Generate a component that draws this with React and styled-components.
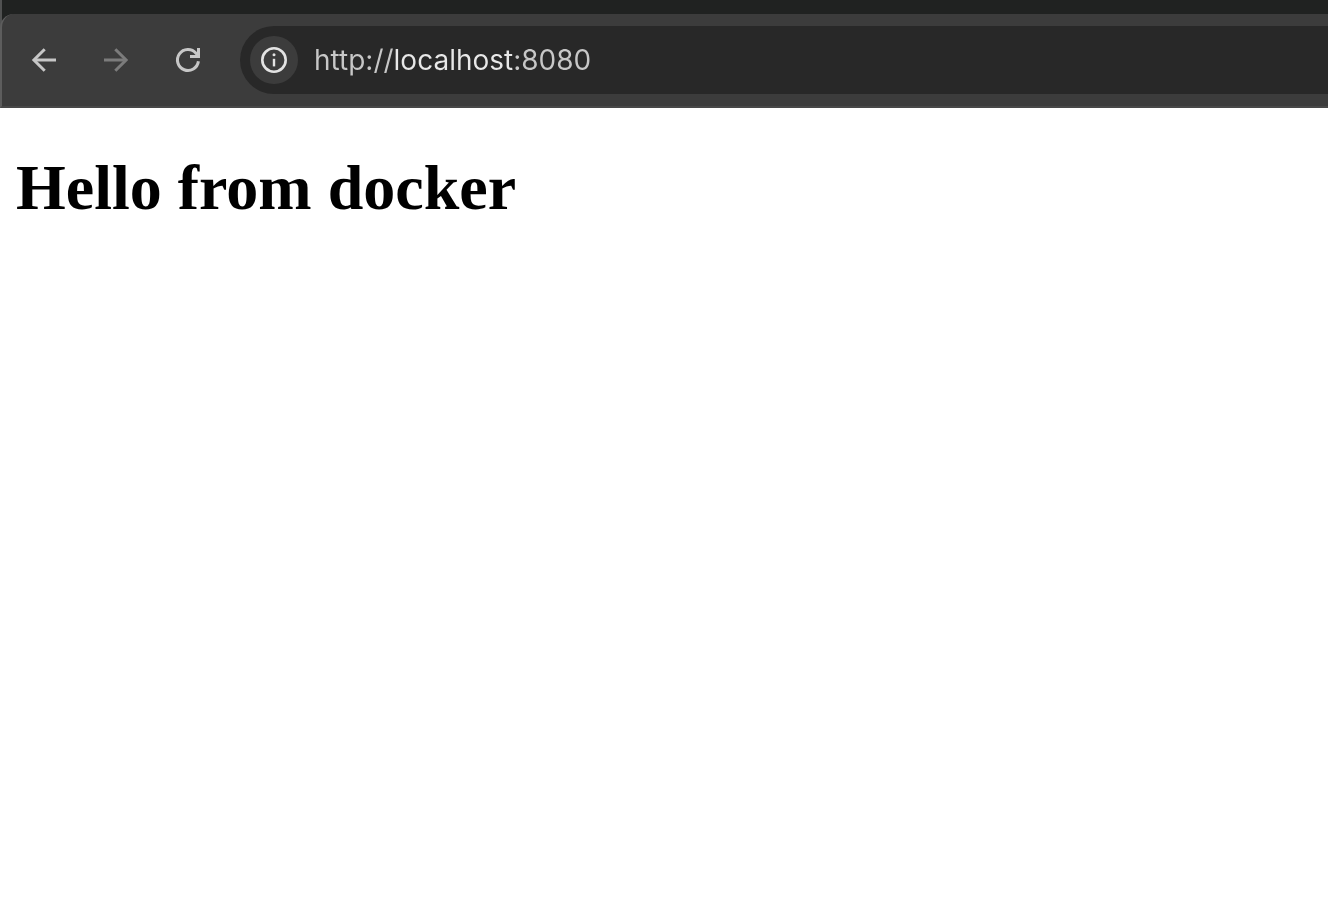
import React from "react";
import styled, { createGlobalStyle } from "styled-components";

const GlobalStyle = createGlobalStyle`
  body {
    margin: 0;
    background: #ffffff;
  }
  *, *::before, *::after {
    box-sizing: border-box;
  }
`;

const BrowserFrame = styled.header`
  padding-top: 14px;
  background: linear-gradient(to right, #505151 2px, #202221 2px);
`;

const Toolbar = styled.nav`
  display: flex;
  align-items: center;
  gap: 24px;
  height: 94px;
  padding-left: 18px;
  border-left: 2px solid #5d5d5d;
  border-bottom: 2px solid #484848;
  border-top-left-radius: 14px;
  background: #3c3c3c;
`;

const NavButton = styled.button`
  display: flex;
  flex: none;
  padding: 0;
  border: 0;
  background: none;
  color: ${({ $muted }) => ($muted ? "#7c7c7c" : "#c7c7c7")};
`;

const AddressBar = styled.div`
  display: flex;
  flex: 1;
  align-items: center;
  gap: 16px;
  min-width: 0;
  height: 68px;
  margin-left: 4px;
  padding-left: 10px;
  border-radius: 34px 0 0 34px;
  background: #282828;
`;

const SiteInfoButton = styled.button`
  display: flex;
  flex: none;
  padding: 0;
  border: 0;
  border-radius: 50%;
  background: #3c3c3c;
  color: #e3e3e3;
`;

const UrlInput = styled.input`
  flex: 1;
  min-width: 0;
  height: 40px;
  padding: 0;
  border: 0;
  outline: 0;
  font: 400 28px/40px Inter, "Liberation Sans", sans-serif;
  color: #c7c7c7;
  background: linear-gradient(to right, #c7c7c7 79px, #e8e8e8 79px 199px, #c7c7c7 199px);
  background-clip: text;
  -webkit-text-fill-color: transparent;
`;

const Page = styled.main`
  padding: 43px 16px;
`;

const Heading = styled.h1`
  margin: 0;
  font: 700 64px/74px "Liberation Serif", serif;
  color: #000000;
`;

function Icon({ size = 48, children }) {
  return (
    <svg
      width={size}
      height={size}
      viewBox="0 0 48 48"
      fill="none"
      stroke="currentColor"
      strokeWidth="3"
      aria-hidden="true"
    >
      {children}
    </svg>
  );
}

export default function App() {
  return (
    <>
      <GlobalStyle />
      <BrowserFrame>
        <Toolbar aria-label="Browser">
          <NavButton type="button" aria-label="Back">
            <Icon>
              <path d="M36 24H14" />
              <path d="M24.7 13.2L13.9 24l10.8 10.8" />
            </Icon>
          </NavButton>
          <NavButton type="button" aria-label="Forward" $muted>
            <Icon>
              <path d="M12 24H34" />
              <path d="M23.3 13.2L34.1 24 23.3 34.8" />
            </Icon>
          </NavButton>
          <NavButton type="button" aria-label="Reload">
            <Icon>
              <path d="M34.4 25.3A10.5 10.5 0 1 1 32 17.2L34 20" />
              <path d="M34.5 12V20.5H26" />
            </Icon>
          </NavButton>
          <AddressBar>
            <SiteInfoButton type="button" aria-label="View site information">
              <Icon>
                <circle cx="24" cy="24" r="11.7" strokeWidth="2.6" />
                <path d="M24 22.8V30.4" strokeWidth="2.4" />
                <circle cx="24" cy="18.7" r="1.5" fill="currentColor" stroke="none" />
              </Icon>
            </SiteInfoButton>
            <UrlInput
              type="text"
              aria-label="Address"
              defaultValue="http://localhost:8080"
              spellCheck={false}
            />
          </AddressBar>
        </Toolbar>
      </BrowserFrame>
      <Page>
        <Heading>Hello from docker</Heading>
      </Page>
    </>
  );
}
